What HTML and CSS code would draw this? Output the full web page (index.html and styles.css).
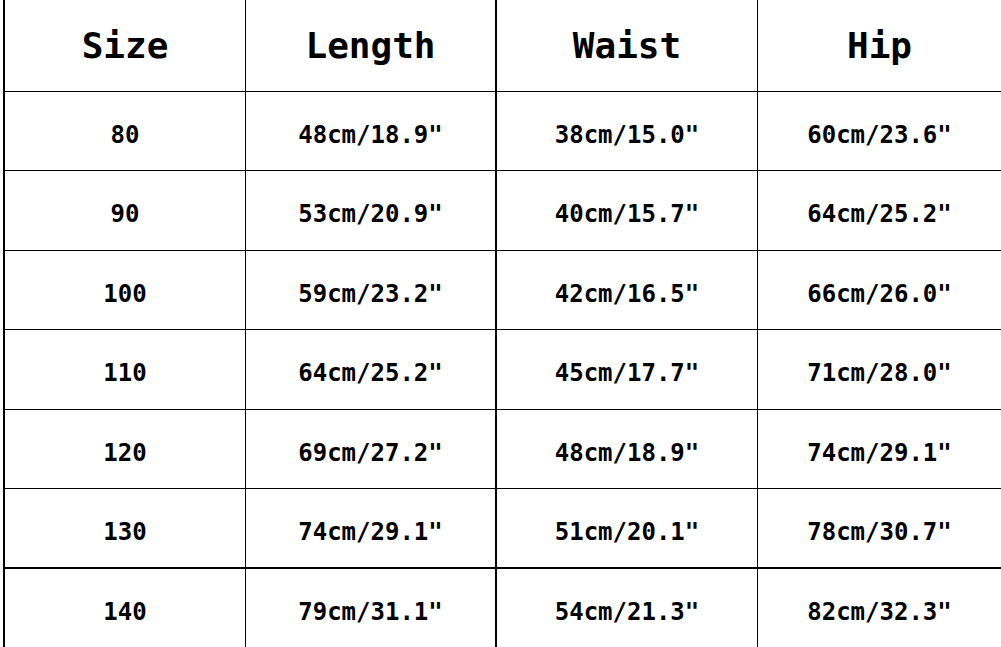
FILE: index.html
```html
<!DOCTYPE html>
<html lang="en">
<head>
<meta charset="utf-8">
<title>Size Chart</title>
<link rel="stylesheet" href="styles.css">
</head>
<body>
<div class="chart">
  <div class="cell head c1">Size</div>
  <div class="cell head c2">Length</div>
  <div class="cell head c3">Waist</div>
  <div class="cell head c4">Hip</div>

  <div class="cell c1">80</div>
  <div class="cell c2">48cm/18.9"</div>
  <div class="cell c3">38cm/15.0"</div>
  <div class="cell c4">60cm/23.6"</div>

  <div class="cell c1">90</div>
  <div class="cell c2">53cm/20.9"</div>
  <div class="cell c3">40cm/15.7"</div>
  <div class="cell c4">64cm/25.2"</div>

  <div class="cell c1">100</div>
  <div class="cell c2">59cm/23.2"</div>
  <div class="cell c3">42cm/16.5"</div>
  <div class="cell c4">66cm/26.0"</div>

  <div class="cell c1">110</div>
  <div class="cell c2">64cm/25.2"</div>
  <div class="cell c3">45cm/17.7"</div>
  <div class="cell c4">71cm/28.0"</div>

  <div class="cell c1">120</div>
  <div class="cell c2">69cm/27.2"</div>
  <div class="cell c3">48cm/18.9"</div>
  <div class="cell c4">74cm/29.1"</div>

  <div class="cell thick c1">130</div>
  <div class="cell thick c2">74cm/29.1"</div>
  <div class="cell thick c3">51cm/20.1"</div>
  <div class="cell thick c4">78cm/30.7"</div>

  <div class="cell last c1">140</div>
  <div class="cell last c2">79cm/31.1"</div>
  <div class="cell last c3">54cm/21.3"</div>
  <div class="cell last c4">82cm/32.3"</div>
</div>
</body>
</html>
```

FILE: styles.css
```css
html, body {
  margin: 0;
  padding: 0;
  background: #ffffff;
}

.chart {
  display: grid;
  grid-template-columns: 241px 251px 261px 243px;
  grid-template-rows: 92px 79px 80px 79px 80px 79px 80px 78px;
  margin-left: 3px;
  border-left: 2px solid #000;
  width: 998px;
  box-sizing: border-box;
  height: 647px;
  overflow: hidden;
  font-family: "DejaVu Sans Mono", "Liberation Mono", monospace;
  font-weight: bold;
  color: #000;
}

.cell {
  box-sizing: border-box;
  display: flex;
  align-items: center;
  justify-content: center;
  border-bottom: 1px solid #000;
  font-size: 24px;
  padding-top: 7px;
  white-space: pre;
}

.head {
  font-size: 36px;
  padding-top: 0;
}

.c1 { border-right: 1px solid #000; }
.c2 { border-right: 2px solid #000; }
.c3 { border-right: 1px solid #000; }
.c4 { border-right: 0; }

.thick { border-bottom-width: 2px; }
.last { border-bottom: 0; }
```
